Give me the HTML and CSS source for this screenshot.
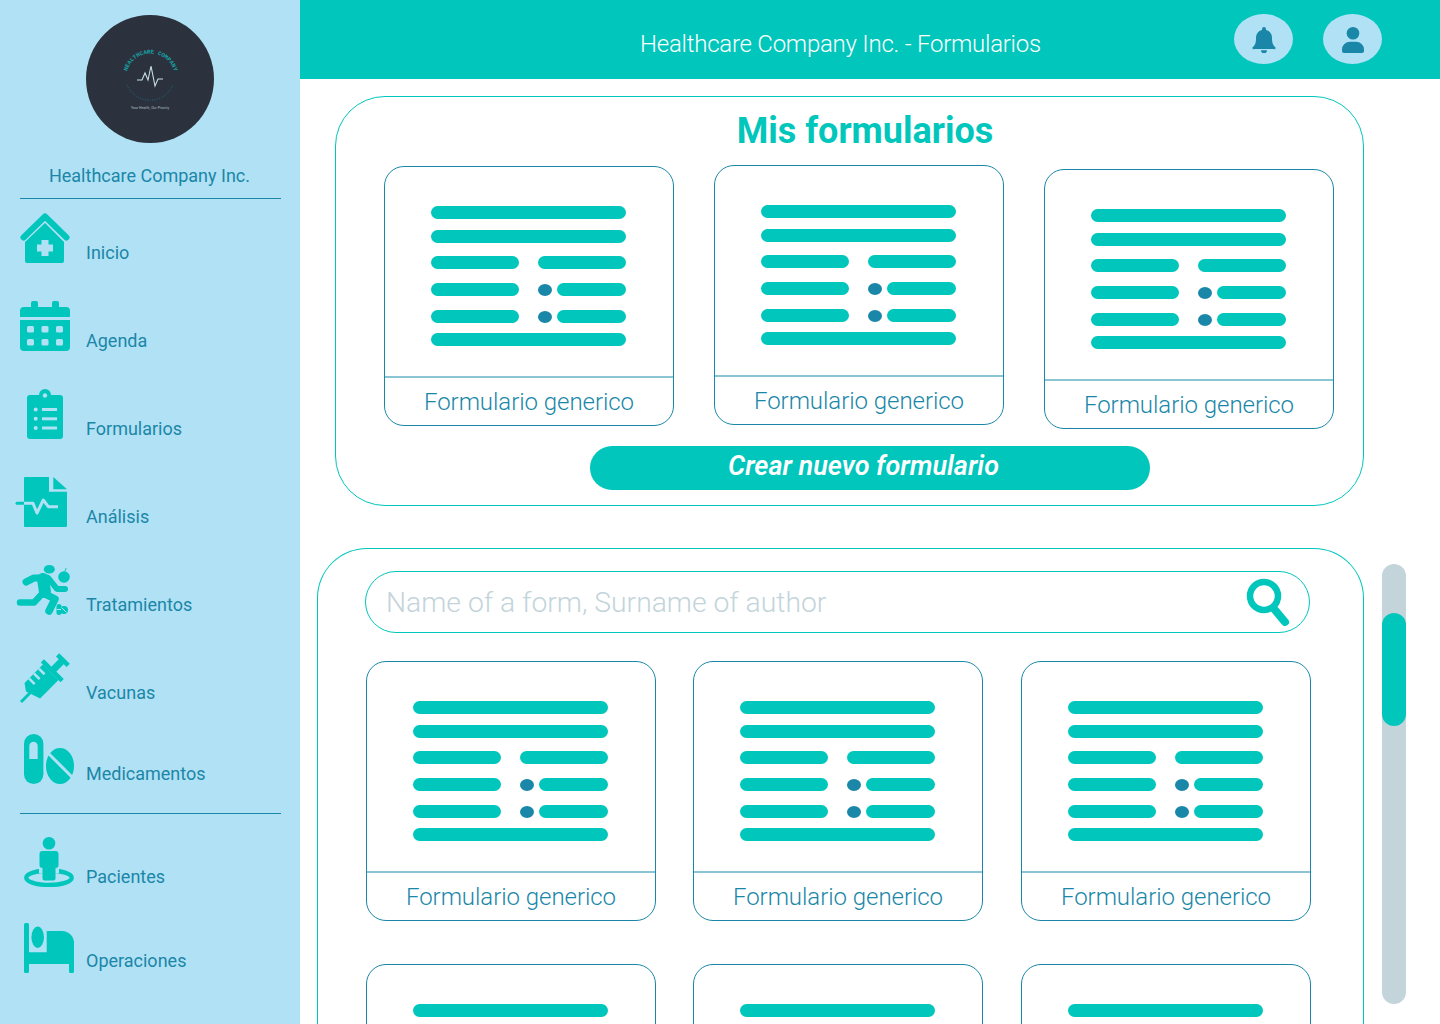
FILE: index.html
```html
<!DOCTYPE html>
<html lang="en">
<head>
<meta charset="UTF-8">
<meta name="viewport" content="width=device-width, initial-scale=1.0">
<title>Healthcare Company Inc. - Formularios</title>
<link rel="stylesheet" href="styles.css">
</head>
<body>
<aside class="sidebar">
    <svg class="logo" viewBox="0 0 128 128">
        <circle cx="64" cy="64" r="64" fill="#2b323d"/>
        <path id="logo-arc" d="M40 63 A24.5 24.5 0 0 1 89 63" fill="none"/>
        <text class="logo-name"><textPath href="#logo-arc" startOffset="50%" text-anchor="middle">HEALTHCARE COMPANY</textPath></text>
        <path d="M51 65 H56 L59 58 L62 65 L65 51 L69 71 L72 64 H77" fill="none" stroke="#c9e0e4" stroke-width="1.1"/>
        <path d="M41 70 A25 25 0 0 0 87 70" fill="none" stroke="#1a87a8" stroke-width=".8" stroke-dasharray=".8 1.6"/>
        <text class="logo-tag" x="64" y="94" text-anchor="middle">Your Health, Our Priority</text>
    </svg>
    <p class="company-name">Healthcare Company Inc.</p>
    <nav class="nav-main">
        <a class="nav-item">
            <svg class="nav-icon" viewBox="0 0 50 50">
                <path class="i-stroke" d="M3.5 24.5 L25 3.5 L46.5 24.5" stroke-width="6"/>
                <path class="i-fill" d="M25 10 L44 29 V48 a2 2 0 0 1 -2 2 H7 a2 2 0 0 1 -2 -2 V29 Z"/>
                <path class="i-light" d="M21.5 27 h7 v4.5 h4.5 v7 h-4.5 v4.5 h-7 v-4.5 h-4.5 v-7 h4.5 Z"/>
            </svg>
            <span>Inicio</span>
        </a>
        <a class="nav-item">
            <svg class="nav-icon" viewBox="0 0 50 50">
                <path class="i-fill" d="M11 2 a2 2 0 0 1 2 -2 h3 a2 2 0 0 1 2 2 v4 h14 v-4 a2 2 0 0 1 2 -2 h3 a2 2 0 0 1 2 2 v4 h7 a4 4 0 0 1 4 4 v6 H0 v-6 a4 4 0 0 1 4 -4 h7 Z"/>
                <path class="i-fill" d="M0 19 H50 V46 a4 4 0 0 1 -4 4 H4 a4 4 0 0 1 -4 -4 Z"/>
                <g class="i-light">
                    <rect x="7" y="25" width="7" height="6.5" rx="1.5"/>
                    <rect x="21.5" y="25" width="7" height="6.5" rx="1.5"/>
                    <rect x="36" y="25" width="7" height="6.5" rx="1.5"/>
                    <rect x="7" y="38" width="7" height="6.5" rx="1.5"/>
                    <rect x="21.5" y="38" width="7" height="6.5" rx="1.5"/>
                    <rect x="36" y="38" width="7" height="6.5" rx="1.5"/>
                </g>
            </svg>
            <span>Agenda</span>
        </a>
        <a class="nav-item">
            <svg class="nav-icon" viewBox="0 0 50 50">
                <circle class="i-fill" cx="25" cy="6" r="6"/>
                <rect class="i-fill" x="7" y="6" width="36" height="44" rx="3"/>
                <circle class="i-light" cx="25" cy="6.5" r="2.2"/>
                <g class="i-light">
                    <circle cx="15.7" cy="20.5" r="2"/>
                    <circle cx="15.7" cy="29.8" r="2"/>
                    <circle cx="15.7" cy="39" r="2"/>
                    <rect x="22" y="19" width="15" height="3"/>
                    <rect x="22" y="28.3" width="15" height="3"/>
                    <rect x="22" y="37.5" width="15" height="3"/>
                </g>
            </svg>
            <span>Formularios</span>
        </a>
        <a class="nav-item">
            <svg class="nav-icon" viewBox="0 0 50 50">
                <path class="i-fill" d="M5 0 H29 V14.7 H47 V49 a1 1 0 0 1 -1 1 H5 a1 1 0 0 1 -1 -1 V1 a1 1 0 0 1 1 -1 Z"/>
                <path class="i-fill" d="M33.3 0 L47 12.3 H33.3 Z"/>
                <path class="i-stroke" d="M-3 26.3 H4" stroke-width="3" stroke-linecap="butt"/>
                <path d="M4 26.3 H13 L17 36 L23.3 23 L28.3 29.7 H38" fill="none" stroke="#b1e1f4" stroke-width="3" stroke-linejoin="round"/>
            </svg>
            <span>Análisis</span>
        </a>
        <a class="nav-item">
            <svg class="nav-icon" viewBox="0 0 50 50">
                <ellipse class="i-fill" cx="29.3" cy="4.3" rx="5.5" ry="4.3"/>
                <circle class="i-fill" cx="44" cy="12" r="5.8"/>
                <path class="i-stroke" d="M45 6 L46 3.5" stroke-width="1"/>
                <path class="i-stroke" d="M6 17 L14 13 H27" stroke-width="7"/>
                <path class="i-stroke" d="M23 14 L25 27" stroke-width="12"/>
                <path class="i-stroke" d="M29 14 L37 24 H45" stroke-width="6"/>
                <path class="i-stroke" d="M25 29 L35 34 L29 46" stroke-width="7.5"/>
                <path class="i-stroke" d="M22 29 L14 37.5 H0" stroke-width="6.5"/>
                <rect class="i-fill" x="36.5" y="39" width="5" height="11" rx="2.5"/>
                <circle class="i-fill" cx="44" cy="45" r="4"/>
                <path d="M37 44.5 H41" stroke="#b1e1f4"/>
                <path d="M41.5 42.5 L46.5 47.5" stroke="#b1e1f4"/>
            </svg>
            <span>Tratamientos</span>
        </a>
        <a class="nav-item">
            <svg class="nav-icon" viewBox="0 0 50 50">
                <g transform="translate(1 49) rotate(-45)">
                    <rect class="i-fill" x="0" y="-1.5" width="13" height="3"/>
                    <path class="i-fill" d="M11 -4 L16 -11 H42 V11 H16 Z"/>
                    <rect class="i-fill" x="42" y="-14" width="4.5" height="28"/>
                    <rect class="i-fill" x="46" y="-3.5" width="13" height="7"/>
                    <rect class="i-fill" x="57" y="-7.5" width="4.5" height="15"/>
                    <g class="i-light">
                        <rect x="21" y="-11" width="2.6" height="8"/>
                        <rect x="28" y="-11" width="2.6" height="8"/>
                        <rect x="35" y="-11" width="2.6" height="8"/>
                    </g>
                </g>
            </svg>
            <span>Vacunas</span>
        </a>
        <a class="nav-item nav-item-pills">
            <svg class="nav-icon" viewBox="0 0 50 50">
                <rect class="i-fill" x="4" y="0" width="19.4" height="50" rx="9.7"/>
                <path class="i-light" d="M9.3 25 V12 a4.2 4.2 0 0 1 8.4 0 V25 Z"/>
                <ellipse class="i-fill" cx="40" cy="32" rx="14" ry="18"/>
                <path d="M28.5 19.5 L52 43" stroke="#b1e1f4" stroke-width="3"/>
            </svg>
            <span>Medicamentos</span>
        </a>
    </nav>
    <nav class="nav-second">
        <a class="nav-item">
            <svg class="nav-icon" viewBox="0 0 50 50">
                <ellipse cx="29" cy="40.7" rx="22.7" ry="7.2" fill="none" stroke="#00c6bc" stroke-width="4.4"/>
                <rect class="i-light" x="19" y="28" width="20" height="8"/>
                <circle class="i-fill" cx="29" cy="6.3" r="6.3"/>
                <path class="i-fill" d="M22.5 14 h13 a3 3 0 0 1 3 3 V28 a3 3 0 0 1 -3 3 V41.5 a2 2 0 0 1 -2 2 h-9 a2 2 0 0 1 -2 -2 V31 a3 3 0 0 1 -3 -3 V17 a3 3 0 0 1 3 -3 Z"/>
            </svg>
            <span>Pacientes</span>
        </a>
        <a class="nav-item nav-item-bed">
            <svg class="nav-icon" viewBox="0 0 50 50">
                <rect class="i-fill" x="4" y="0" width="5" height="50" rx="1.5"/>
                <ellipse class="i-fill" cx="17.7" cy="14.3" rx="6.3" ry="10.7"/>
                <path class="i-fill" d="M26.7 8 H42 a12 12 0 0 1 12 12 V48.5 a1.5 1.5 0 0 1 -1.5 1.5 h-2 a1.5 1.5 0 0 1 -1.5 -1.5 V41 H4 V29.3 H26.7 Z"/>
            </svg>
            <span>Operaciones</span>
        </a>
    </nav>
</aside>

<div class="content">
    <header class="topbar">
        <h1 class="topbar-title">Healthcare Company Inc. - Formularios</h1>
        <div class="topbar-actions">
            <button class="round-btn">
                <svg width="24" height="26" viewBox="0 0 24 26"><path d="M12 0 a2 2 0 0 1 2 2 v1 c4 1 6 4 6 8 c0 5 1 7 3 9 a1 1 0 0 1 -1 2 H2 a1 1 0 0 1 -1 -2 c2 -2 3 -4 3 -9 c0 -4 2 -7 6 -8 V2 a2 2 0 0 1 2 -2 Z M9 23.3 h6 a3 3 0 0 1 -6 0 Z"/></svg>
            </button>
            <button class="round-btn">
                <svg width="22" height="26" viewBox="0 0 22 26"><circle cx="11" cy="6.3" r="6.3"/><path d="M8 14.7 h6 a8 8 0 0 1 8 8 v1.3 a2 2 0 0 1 -2 2 H2 a2 2 0 0 1 -2 -2 v-1.3 a8 8 0 0 1 8 -8 Z"/></svg>
            </button>
        </div>
    </header>

    <main class="main">
        <section class="panel panel-mine">
            <h2 class="panel-title">Mis formularios</h2>
            <div class="mine-row">
                <article class="form-card card-a">
                    <div class="form-preview">
                        <div class="line"></div>
                        <div class="line"></div>
                        <div class="line-row"><span class="line half"></span><span class="line half"></span></div>
                        <div class="line-row"><span class="line half"></span><span class="dot"></span><span class="line short"></span></div>
                        <div class="line-row"><span class="line half"></span><span class="dot"></span><span class="line short"></span></div>
                        <div class="line"></div>
                    </div>
                    <p class="form-name">Formulario generico</p>
                </article>
                <article class="form-card">
                    <div class="form-preview">
                        <div class="line"></div>
                        <div class="line"></div>
                        <div class="line-row"><span class="line half"></span><span class="line half"></span></div>
                        <div class="line-row"><span class="line half"></span><span class="dot"></span><span class="line short"></span></div>
                        <div class="line-row"><span class="line half"></span><span class="dot"></span><span class="line short"></span></div>
                        <div class="line"></div>
                    </div>
                    <p class="form-name">Formulario generico</p>
                </article>
                <article class="form-card card-c">
                    <div class="form-preview">
                        <div class="line"></div>
                        <div class="line"></div>
                        <div class="line-row"><span class="line half"></span><span class="line half"></span></div>
                        <div class="line-row"><span class="line half"></span><span class="dot"></span><span class="line short"></span></div>
                        <div class="line-row"><span class="line half"></span><span class="dot"></span><span class="line short"></span></div>
                        <div class="line"></div>
                    </div>
                    <p class="form-name">Formulario generico</p>
                </article>
            </div>
            <button class="create-btn">Crear nuevo formulario</button>
        </section>

        <div class="browse">
            <section class="panel panel-all">
                <div class="search">
                    <input class="search-input" type="text" placeholder="Name of a form, Surname of author">
                    <svg class="search-icon" width="44" height="50" viewBox="0 0 44 50">
                        <circle cx="18" cy="19" r="14" fill="none" stroke="#00c6bc" stroke-width="6.5"/>
                        <path d="M29 33 L39 45" stroke="#00c6bc" stroke-width="8" stroke-linecap="round"/>
                    </svg>
                </div>
                <div class="form-grid">
                    <article class="form-card">
                        <div class="form-preview">
                            <div class="line"></div>
                            <div class="line"></div>
                            <div class="line-row"><span class="line half"></span><span class="line half"></span></div>
                            <div class="line-row"><span class="line half"></span><span class="dot"></span><span class="line short"></span></div>
                            <div class="line-row"><span class="line half"></span><span class="dot"></span><span class="line short"></span></div>
                            <div class="line"></div>
                        </div>
                        <p class="form-name">Formulario generico</p>
                    </article>
                    <article class="form-card">
                        <div class="form-preview">
                            <div class="line"></div>
                            <div class="line"></div>
                            <div class="line-row"><span class="line half"></span><span class="line half"></span></div>
                            <div class="line-row"><span class="line half"></span><span class="dot"></span><span class="line short"></span></div>
                            <div class="line-row"><span class="line half"></span><span class="dot"></span><span class="line short"></span></div>
                            <div class="line"></div>
                        </div>
                        <p class="form-name">Formulario generico</p>
                    </article>
                    <article class="form-card">
                        <div class="form-preview">
                            <div class="line"></div>
                            <div class="line"></div>
                            <div class="line-row"><span class="line half"></span><span class="line half"></span></div>
                            <div class="line-row"><span class="line half"></span><span class="dot"></span><span class="line short"></span></div>
                            <div class="line-row"><span class="line half"></span><span class="dot"></span><span class="line short"></span></div>
                            <div class="line"></div>
                        </div>
                        <p class="form-name">Formulario generico</p>
                    </article>
                    <article class="form-card">
                        <div class="form-preview"><div class="line"></div></div>
                    </article>
                    <article class="form-card">
                        <div class="form-preview"><div class="line"></div></div>
                    </article>
                    <article class="form-card">
                        <div class="form-preview"><div class="line"></div></div>
                    </article>
                </div>
            </section>
            <div class="scroll-track"><div class="scroll-thumb"></div></div>
        </div>
    </main>
</div>
</body>
</html>
```

FILE: styles.css
```css
* {
    box-sizing: border-box;
}

body {
    margin: 0;
    height: 1024px;
    overflow: hidden;
    display: flex;
    background-color: #fff;
    font-family: Roboto, sans-serif;
}

/* sidebar */
.sidebar {
    width: 300px;
    height: 1024px;
    flex-shrink: 0;
    background-color: #b1e1f4;
    padding-top: 15px;
    color: #1a87a8;
}

.logo {
    display: block;
    width: 128px;
    height: 128px;
    margin-left: 86px;
}

.logo-name {
    font-family: "Liberation Mono", monospace;
    font-size: 5.8px;
    font-weight: 700;
    fill: #17a5a8;
}

.logo-tag {
    font-family: Roboto, sans-serif;
    font-size: 3.6px;
    fill: #aebcc2;
}

.company-name {
    margin: 22px 0 0 20px;
    width: 261px;
    height: 34px;
    padding-right: 2px;
    font-size: 18px;
    line-height: 22px;
    text-align: center;
    border-bottom: 1px solid #1a87a8;
}

.nav-main {
    display: flex;
    flex-direction: column;
    gap: 38px;
    margin-top: 14px;
    margin-left: 20px;
    width: 261px;
    height: 601px;
    border-bottom: 1px solid #1a87a8;
}

.nav-second {
    display: flex;
    flex-direction: column;
    gap: 36px;
    margin-top: 23px;
    margin-left: 20px;
}

.nav-item {
    display: flex;
    align-items: flex-end;
    gap: 16px;
    height: 50px;
    font-size: 18px;
    line-height: 20px;
}

.nav-item-pills {
    margin-top: -7px;
}

.nav-item-bed span {
    margin-bottom: 2px;
}

.nav-icon {
    width: 50px;
    height: 50px;
    flex-shrink: 0;
    overflow: visible;
}

.i-fill {
    fill: #00c6bc;
}

.i-light {
    fill: #b1e1f4;
}

.i-stroke {
    fill: none;
    stroke: #00c6bc;
    stroke-linecap: round;
    stroke-linejoin: round;
}

/* top bar */
.content {
    flex: 1;
    min-width: 0;
}

.topbar {
    display: flex;
    align-items: center;
    justify-content: space-between;
    height: 79px;
    padding: 0 58px 0 340px;
    background-color: #00c6bc;
}

.topbar-title {
    margin: 9px 0 0;
    font-size: 24px;
    font-weight: 300;
    letter-spacing: -0.24px;
    line-height: 28px;
    color: #fff;
}

.topbar-actions {
    display: flex;
    gap: 30px;
    margin-top: -1px;
}

.round-btn {
    display: flex;
    align-items: center;
    justify-content: center;
    width: 59px;
    height: 50px;
    padding: 1px 0 0 1px;
    border: none;
    border-radius: 50%;
    background-color: #b1e1f4;
    cursor: pointer;
}

.round-btn svg {
    fill: #1a87a8;
}

/* panels */
.main {
    padding-top: 17px;
}

.panel {
    border: 1px solid #00c6bc;
    border-radius: 50px;
    background-color: #fff;
}

.panel-mine {
    width: 1029px;
    height: 410px;
    margin-left: 35px;
    padding: 14px 0 0 48px;
}

.panel-title {
    margin: 0 0 0 -48px;
    padding-left: 31px;
    font-size: 36px;
    font-weight: 700;
    line-height: 41px;
    text-align: center;
    color: #00c6bc;
}

.mine-row {
    display: flex;
    align-items: flex-start;
    gap: 40px;
    margin-top: 13px;
}

.card-a {
    margin-top: 1px;
}

.card-c {
    margin-top: 4px;
}

.create-btn {
    display: block;
    width: 560px;
    height: 44px;
    margin: 17px 0 0 206px;
    padding: 0 13px 4px 0;
    border: none;
    border-radius: 22px;
    background-color: #00c6bc;
    color: #fff;
    font-family: Roboto, sans-serif;
    font-size: 27px;
    font-style: italic;
    font-weight: 600;
    cursor: pointer;
}

.browse {
    display: flex;
    align-items: flex-start;
    gap: 18px;
    margin: 42px 0 0 17px;
}

.panel-all {
    width: 1047px;
    height: 476px;
    flex-shrink: 0;
    overflow: hidden;
    padding: 22px 0 0 47px;
    border-bottom: none;
    border-radius: 50px 50px 0 0;
}

.scroll-track {
    width: 24px;
    height: 440px;
    margin-top: 16px;
    padding-top: 49px;
    border-radius: 12px;
    background-color: #c3d4db;
}

.scroll-thumb {
    height: 113px;
    border-radius: 12px;
    background-color: #00c6bc;
}

/* search */
.search {
    display: flex;
    align-items: center;
    width: 945px;
    height: 62px;
    padding: 0 19px 0 20px;
    border: 1px solid #00c6bc;
    border-radius: 31px;
}

.search-input {
    flex: 1;
    min-width: 0;
    padding: 0;
    border: none;
    outline: none;
    font-family: Roboto, sans-serif;
    font-size: 28.3px;
    font-weight: 300;
    color: #c3d4db;
}

.search-input::placeholder {
    color: #c3d4db;
    opacity: 1;
}

/* form cards */
.form-grid {
    display: grid;
    grid-template-columns: 327px 328px 290px;
    row-gap: 43px;
    margin: 28px 0 0 1px;
}

.form-card {
    width: 290px;
    height: 260px;
    flex-shrink: 0;
    overflow: hidden;
    border: 1px solid #1a87a8;
    border-radius: 20px;
    background-color: #fff;
}

.form-preview {
    height: 211px;
    padding: 39px 47px 0 46px;
    border-bottom: 2px solid #8ac5d5;
}

.form-preview > :nth-child(2) {
    margin-top: 11px;
}

.form-preview > :nth-child(3) {
    margin-top: 13px;
}

.form-preview > :nth-child(4),
.form-preview > :nth-child(5) {
    margin-top: 14px;
}

.form-preview > :nth-child(6) {
    margin-top: 10px;
}

.line {
    display: block;
    height: 13px;
    border-radius: 7px;
    background-color: #00c6bc;
}

.line-row {
    display: flex;
    align-items: center;
}

.half {
    width: 88px;
}

.half:first-child {
    margin-right: 19px;
}

.short {
    width: 69px;
}

.dot {
    width: 14px;
    height: 12px;
    margin: 1px 5px 0 0;
    border-radius: 50%;
    background-color: #1a87a8;
}

.form-name {
    margin: 0;
    font-size: 24px;
    font-weight: 300;
    letter-spacing: -0.05px;
    line-height: 48px;
    text-align: center;
    color: #1a87a8;
}
```
